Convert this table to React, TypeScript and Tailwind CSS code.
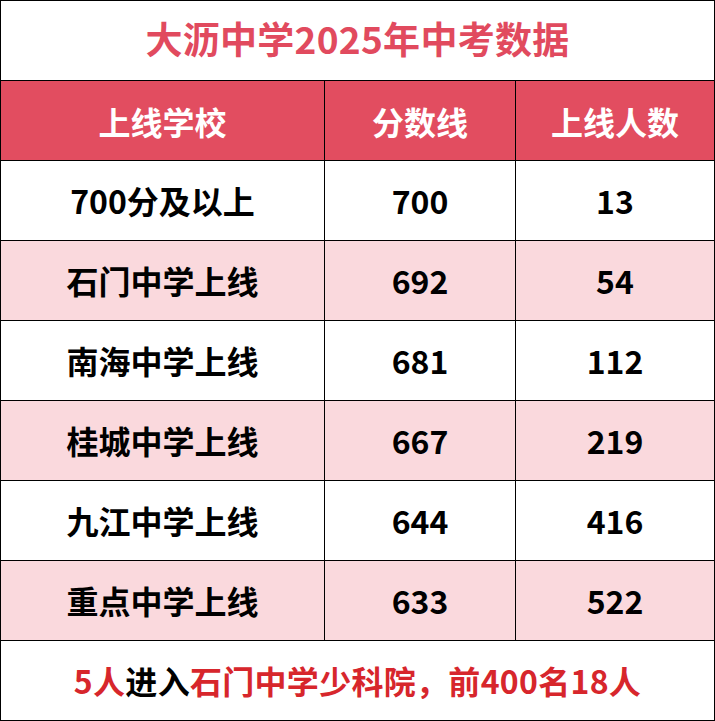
const rows = [
  { name: "700分及以上", score: "700", count: "13" },
  { name: "石门中学上线", score: "692", count: "54" },
  { name: "南海中学上线", score: "681", count: "112" },
  { name: "桂城中学上线", score: "667", count: "219" },
  { name: "九江中学上线", score: "644", count: "416" },
  { name: "重点中学上线", score: "633", count: "522" },
];

const font = { fontFamily: '"Noto Sans CJK SC", "Noto Sans", sans-serif' };

export default function App() {
  return (
    <div className="w-[715px] h-[721px] bg-white border border-black font-bold" style={font}>
      <div className="h-20 flex items-center justify-center border-b border-black text-[37px] text-[#e14a5e] tracking-[0.3px] pb-1">
        大沥中学2025年中考数据
      </div>
      <div className="h-20 flex border-b border-black bg-[#e24d60] text-white text-[32px]">
        <div className="w-[324px] border-r border-black flex items-center justify-center">上线学校</div>
        <div className="w-[191px] border-r border-black flex items-center justify-center">分数线</div>
        <div className="flex-1 flex items-center justify-center">上线人数</div>
      </div>
      {rows.map((r, i) => (
        <div
          key={r.name}
          className={`h-20 flex border-b border-black text-black text-[32px] ${i % 2 === 1 ? "bg-[#fad9dd]" : "bg-white"}`}
        >
          <div className="w-[324px] border-r border-black flex items-center justify-center pb-0.5">{r.name}</div>
          <div className="w-[191px] border-r border-black flex items-center justify-center pb-0.5">{r.score}</div>
          <div className="flex-1 flex items-center justify-center pb-0.5">{r.count}</div>
        </div>
      ))}
      <div className="h-[79px] flex items-center justify-center text-[32px] text-[#d7262c] tracking-[0.3px] pb-0.5">
        <span>5人</span>
        <span className="text-black">进入</span>
        <span>石门中学少科院，前400名18人</span>
      </div>
    </div>
  );
}
